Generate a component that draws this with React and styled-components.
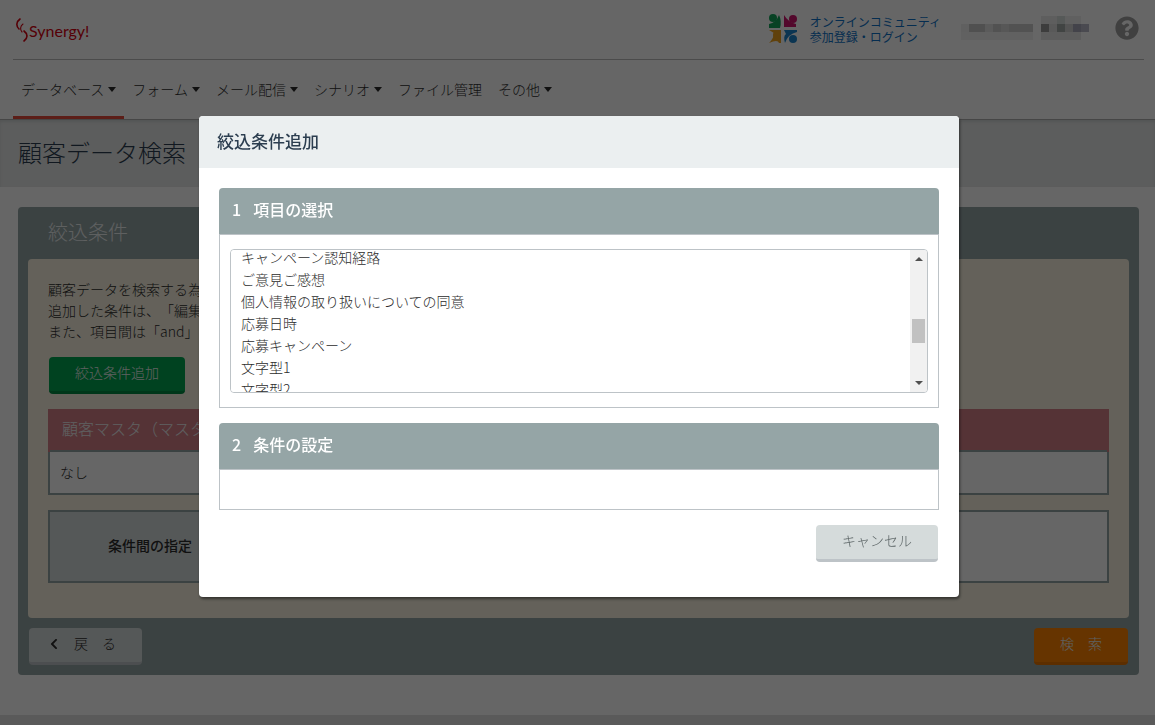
import React, { useEffect, useRef } from "react"
import styled, { createGlobalStyle } from "styled-components"
import { FaChevronLeft, FaQuestionCircle } from "react-icons/fa"

const GlobalStyle = createGlobalStyle`
    * {
        box-sizing: border-box;
    }

    body {
        margin: 0;
        background: #ffffff;
        color: #2c2c2c;
        font-family: "Noto Sans CJK JP", sans-serif;
        font-size: 14px;
        font-weight: 300;
        line-height: 21px;
        text-spacing-trim: space-all;
    }

    button, select {
        font: inherit;
    }
`

const Page = styled.div`
    display: flex;
    flex-direction: column;
    min-height: 100vh;
    overflow: hidden;
`

const Header = styled.header`
    padding: 0 11px 0 13px;
    border-bottom: 1px solid #b0b0b0;
`

const HeaderTop = styled.div`
    display: flex;
    align-items: center;
    height: 60px;
    padding: 0 5px 3px 3px;
    border-bottom: 1px solid #bcbcbc;
`

const Brand = styled.a`
    display: flex;
    align-items: center;
    margin-right: auto;
    padding-top: 5px;
    color: #d7000f;
    font-family: "Lato", sans-serif;
    font-size: 16px;
    font-weight: 400;
    text-decoration: none;
`

const Community = styled.a`
    display: flex;
    align-items: center;
    gap: 12px;
    margin-right: 20px;
    padding-top: 2px;
    color: #0d72c7;
    font-size: 12px;
    font-weight: 400;
    line-height: 15px;
    text-decoration: none;
`

const Account = styled.svg`
    margin-right: 26px;
`

const HelpButton = styled.button`
    display: flex;
    padding: 0;
    border: 0;
    background: none;
    color: #a0a0a0;
    font-size: 24px;
`

const Nav = styled.nav`
    display: flex;
    height: 59px;
`

const NavItem = styled.a`
    display: flex;
    align-items: center;
    gap: 4px;
    padding: 2px 8px 0;
    border-bottom: 3px solid ${props => props.$active ? "#e74c3c" : "transparent"};
    color: #2c2c2c;
    text-decoration: none;
`

const Caret = styled.span`
    border: 4px solid transparent;
    border-top: 5px solid #2c2c2c;
    border-bottom: 0;
`

const TitleBand = styled.div`
    padding: 14px 18px 17px;
    background: #e6e8e8;
    box-shadow: inset 0 2px 3px #d0d4d4;
`

const PageTitle = styled.h1`
    margin: 0;
    color: #2c3e50;
    font-size: 24px;
    font-weight: 300;
    line-height: 36px;
`

const Panel = styled.main`
    margin: 20px 16px 40px 18px;
    padding: 0 10px 10px;
    border-radius: 4px;
    background: #95a5a6;
`

const PanelTitle = styled.h2`
    margin: 0;
    padding: 0 20px 2px;
    color: #ecf0f1;
    font-size: 20px;
    font-weight: 300;
    line-height: 50px;
`

const PanelBody = styled.div`
    padding: 20px 20px 35px;
    border-radius: 4px;
    background: #f9f3e1;
`

const Lead = styled.p`
    margin: 0 0 15px;
`

const Button = styled.button`
    display: flex;
    align-items: center;
    justify-content: center;
    height: 37px;
    margin: 0 1px;
    padding: 0 26px 3px;
    border: 0;
    border-bottom: 3px solid ${props => props.$edge};
    border-radius: 4px;
    background: ${props => props.$color};
    color: ${props => props.$text};
    white-space: pre;
`

const BackButton = styled(Button)`
    padding: 0 26px 3px 19px;
`

const Table = styled.table`
    width: 100%;
    margin-top: 15px;
    border-collapse: collapse;

    td, tbody th {
        border: 2px solid #95a5a6;
    }
`

const MasterHead = styled.th`
    height: 42px;
    padding: 0 12px 3px;
    border: 2px solid #d58088;
    border-width: 0 2px;
    background: #d58088;
    color: #ecf0f1;
    font-size: 16px;
    font-weight: 300;
    text-align: left;
`

const ConditionHead = styled.th`
    width: 202px;
    height: 71px;
    padding: 0 0 3px;
    background: #d5dbdb;
    font-weight: 500;
`

const Cell = styled.td`
    height: 43px;
    padding: 0 10px;
    background: #ffffff;
`

const PanelFooter = styled.div`
    display: flex;
    justify-content: space-between;
    padding-top: 10px;
`

const PageFooter = styled.footer`
    flex: 1;
    min-height: 11px;
    background: #e2e2e2;
`

const Overlay = styled.div`
    position: fixed;
    inset: 0;
    display: flex;
    align-items: flex-start;
    justify-content: center;
    padding: 116px 0 0 3px;
    background: rgba(0, 0, 0, 0.6);
`

const Modal = styled.section`
    width: 760px;
    max-width: 100%;
    overflow: hidden;
    border-radius: 4px;
    background: #ffffff;
    box-shadow: 1px 2px 3px rgba(0, 0, 0, 0.5);
`

const ModalTitle = styled.h2`
    margin: 0;
    padding: 0 18px 2px;
    background: #ebeff0;
    color: #2c3e50;
    font-size: 17px;
    font-weight: 500;
    line-height: 50px;
`

const ModalBody = styled.div`
    display: flex;
    flex-direction: column;
    gap: 15px;
    padding: 20px 20px 35px;
`

const StepTitle = styled.h3`
    display: flex;
    gap: 12px;
    margin: 0;
    padding: 0 13px 4px;
    border-radius: 4px 4px 0 0;
    background: #95a5a6;
    color: #ffffff;
    font-size: 16px;
    font-weight: 500;
    line-height: 42px;
`

const StepBody = styled.div`
    min-height: 41px;
    padding: ${props => props.$filled ? "14px 10px" : "0"};
    border: 1px solid #bdc3c7;
`

const ListBox = styled.div`
    display: flex;
    height: 144px;
    overflow: hidden;
    border: 1px solid #bdc3c7;
    border-radius: 4px;
`

const List = styled.select`
    flex: 1;
    min-width: 0;
    height: 100%;
    padding: 0;
    border: 0;
    outline: 0;
    background: #ffffff;
    scrollbar-width: none;

    option {
        min-height: 22px;
        padding: 0 10px;
        color: #2c2c2c;
        font-weight: 300;
        line-height: 22px;
    }
`

const ScrollTrack = styled.div`
    display: flex;
    flex-direction: column;
    align-items: center;
    width: 17px;
    padding: 7px 0;
    background: #f1f1f1;
`

const ScrollArrow = styled.span`
    border: 4px solid transparent;
    border-top: ${props => props.$up ? "0" : "4px solid #505050"};
    border-bottom: ${props => props.$up ? "4px solid #505050" : "0"};
`

const ScrollThumb = styled.span`
    width: 13px;
    height: 24px;
    margin: 58px 0 auto;
    background: #c1c1c1;
`

const Actions = styled.div`
    display: flex;
    justify-content: flex-end;
`

const menus = [
    { label: "データベース", menu: true, active: true },
    { label: "フォーム", menu: true },
    { label: "メール配信", menu: true },
    { label: "シナリオ", menu: true },
    { label: "ファイル管理" },
    { label: "その他", menu: true }
]

const fields = [
    "キャンペーン認知経路",
    "ご意見ご感想",
    "個人情報の取り扱いについての同意",
    "応募日時",
    "応募キャンペーン",
    "文字型1",
    "文字型2",
    "文字型3"
]

// [x, y, width, color] of each mosaic block
const mosaic = [
    [0, 0, 72, "#f0f0f0"], [8, 0, 16, "#c8c8c8"], [24, 0, 8, "#e4e4e4"], [32, 0, 8, "#cccccc"],
    [40, 0, 8, "#dadada"], [48, 0, 24, "#cecece"], [0, 8, 72, "#f2f2f2"], [80, 0, 8, "#9a9a9a"],
    [88, 0, 8, "#dedede"], [96, 0, 8, "#a4aaa8"], [104, 0, 8, "#d2d2d2"], [112, 0, 8, "#a8a8b8"],
    [120, 0, 8, "#b8b8c8"], [80, 8, 40, "#e8e8e8"], [80, -8, 16, "#ececec"], [96, -8, 8, "#d8dedc"],
    [104, -8, 16, "#f0f0f0"]
]

const SynergyMark = () => (
    <svg width="13" height="26" viewBox="0 0 13 26" fill="none" stroke="#d7000f" strokeLinecap="round">
        <path d="M4 1C0 4 0 8 3 11" strokeWidth="1.6"/>
        <path d="M7 6C4 8 4 12 6 14" strokeWidth="1.1"/>
        <path d="M8 13C12 16 12 20 8 23" strokeWidth="1.6"/>
    </svg>
)

const CommunityMark = () => (
    <svg width="30" height="30" viewBox="0 0 30 30">
        <g fill="#14a65a"><circle cx="5" cy="4" r="4"/><path d="M1 14V10Q8 9 11 1Q14 7 12 14Z"/></g>
        <g fill="#d0146e"><circle cx="25" cy="5" r="4"/><path d="M16 1Q20 8 28 10V13H16Z"/></g>
        <g fill="#f0a21c"><circle cx="9" cy="21" r="4"/><path d="M1 16H13V29H11Q10 25 1 29Q6 24 6 19Z"/></g>
        <g fill="#1c85cc"><circle cx="25" cy="25" r="4"/><path d="M16 16H29V18Q20 20 17 29Q15 22 18 20Z"/></g>
    </svg>
)

const App = () => {
    const list = useRef(null)

    useEffect(() => {
        list.current.scrollTop = 3
    }, [])

    return (
        <>
            <GlobalStyle/>
            <Page>
                <Header>
                    <HeaderTop>
                        <Brand href="#"><SynergyMark/>Synergy!</Brand>
                        <Community href="#">
                            <CommunityMark/>
                            <span>オンラインコミュニティ<br/>参加登録・ログイン</span>
                        </Community>
                        <Account width="128" height="24" viewBox="0 -8 128 24" shapeRendering="crispEdges">
                            {
                                mosaic.map(([x, y, width, color]) => (
                                    <rect key={`${x}/${y}/${width}`} x={x} y={y} width={width} height="8" fill={color}/>
                                ))
                            }
                        </Account>
                        <HelpButton aria-label="ヘルプ"><FaQuestionCircle/></HelpButton>
                    </HeaderTop>
                    <Nav>
                        {
                            menus.map(item => (
                                <NavItem key={item.label} href="#" $active={item.active}>
                                    {item.label}
                                    {item.menu && <Caret/>}
                                </NavItem>
                            ))
                        }
                    </Nav>
                </Header>
                <TitleBand>
                    <PageTitle>顧客データ検索</PageTitle>
                </TitleBand>
                <Panel>
                    <PanelTitle>絞込条件</PanelTitle>
                    <PanelBody>
                        <Lead>
                            顧客データを検索する為<br/>
                            追加した条件は、「編集<br/>
                            また、項目間は「and」
                        </Lead>
                        <Button $color="#00a650" $edge="#008a42" $text="#ecf0f1">絞込条件追加</Button>
                        <Table>
                            <thead>
                                <tr><MasterHead>顧客マスタ（マスタ</MasterHead></tr>
                            </thead>
                            <tbody>
                                <tr><Cell>なし</Cell></tr>
                            </tbody>
                        </Table>
                        <Table>
                            <tbody>
                                <tr>
                                    <ConditionHead scope="row">条件間の指定</ConditionHead>
                                    <Cell/>
                                </tr>
                            </tbody>
                        </Table>
                    </PanelBody>
                    <PanelFooter>
                        <BackButton $color="#d5dbdb" $edge="#bdc3c7" $text="#2c2c2c">
                            <FaChevronLeft size="12"/>{"　戻　る"}
                        </BackButton>
                        <Button $color="#ff8300" $edge="#e67300" $text="#ecf0f1">検　索</Button>
                    </PanelFooter>
                </Panel>
                <PageFooter/>
            </Page>
            <Overlay>
                <Modal role="dialog" aria-labelledby="modal-title">
                    <ModalTitle id="modal-title">絞込条件追加</ModalTitle>
                    <ModalBody>
                        <div>
                            <StepTitle id="step-field"><span>1</span>項目の選択</StepTitle>
                            <StepBody $filled>
                                <ListBox>
                                    <List ref={list} size="6" aria-labelledby="step-field">
                                        {fields.map(field => <option key={field}>{field}</option>)}
                                    </List>
                                    <ScrollTrack>
                                        <ScrollArrow $up/>
                                        <ScrollThumb/>
                                        <ScrollArrow/>
                                    </ScrollTrack>
                                </ListBox>
                            </StepBody>
                        </div>
                        <div>
                            <StepTitle><span>2</span>条件の設定</StepTitle>
                            <StepBody/>
                        </div>
                        <Actions>
                            <Button $color="#d5dbdb" $edge="#bdc3c7" $text="#5c6566">キャンセル</Button>
                        </Actions>
                    </ModalBody>
                </Modal>
            </Overlay>
        </>
    )
}

export default App
